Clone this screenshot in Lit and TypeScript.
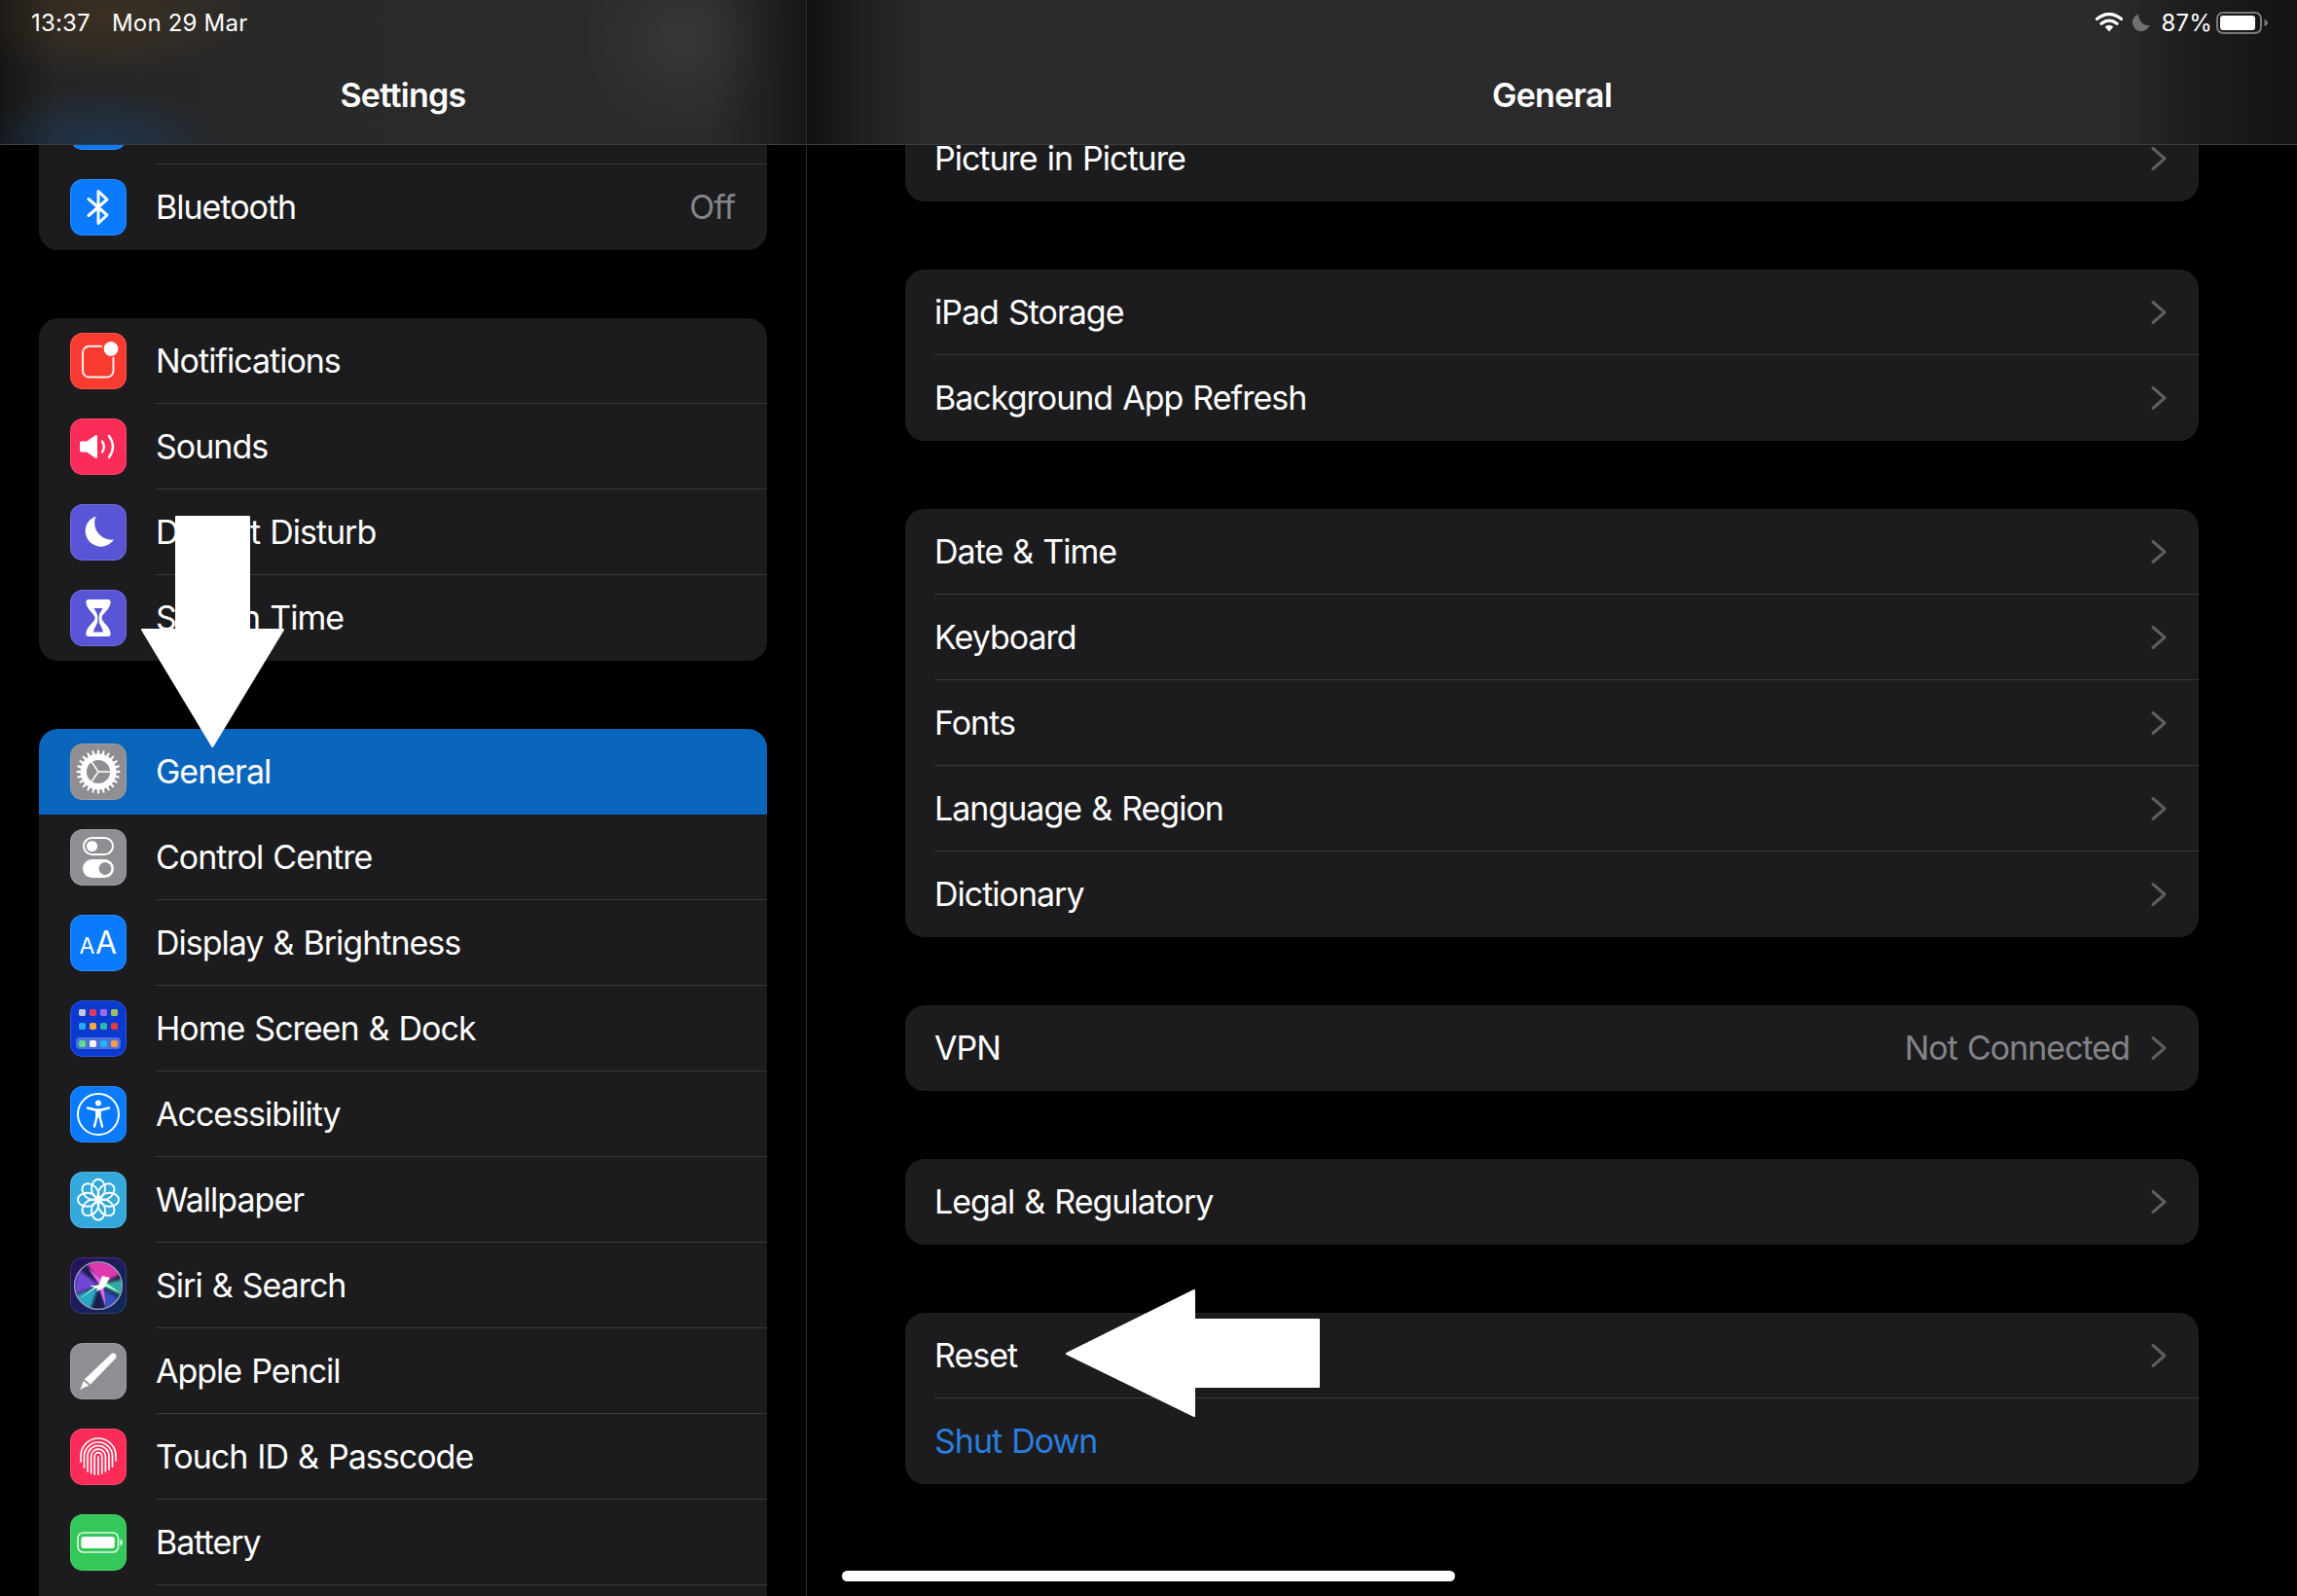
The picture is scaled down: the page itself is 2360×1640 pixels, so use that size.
import { LitElement, html, css, svg } from "lit";
import { customElement } from "lit/decorators.js";

function gearPath(): string {
  const cx = 29, cy = 29, teeth = 24, rOut = 22.4, rBase = 18.4;
  let d = "";
  for (let i = 0; i < teeth; i++) {
    const step = (Math.PI * 2) / teeth;
    const a = i * step;
    const pts: [number, number][] = [
      [rBase, a - step * 0.5],
      [rBase, a - step * 0.26],
      [rOut, a - step * 0.15],
      [rOut, a + step * 0.15],
      [rBase, a + step * 0.26],
    ];
    for (const [r, t] of pts) {
      const x = cx + r * Math.cos(t);
      const y = cy + r * Math.sin(t);
      d += (d ? "L" : "M") + x.toFixed(2) + " " + y.toFixed(2);
    }
  }
  d += "Z M29 16.9 A12.1 12.1 0 1 0 29 41.1 A12.1 12.1 0 1 0 29 16.9Z";
  return d;
}

const I: Record<string, { bg: string; art: unknown }> = {
  wifi: { bg: "#0a7aff", art: svg`` },
  bluetooth: {
    bg: "#0a7aff",
    art: svg`<path d="M19 20.5 38 37 29 45.5V12.5L38 21 19 37.5" fill="none" stroke="#fff" stroke-width="3" stroke-linecap="round" stroke-linejoin="round"/>`,
  },
  notifications: {
    bg: "#f83b30",
    art: svg`<path d="M33 13.8H19.5a6.5 6.5 0 0 0-6.5 6.5V39a6.5 6.5 0 0 0 6.5 6.5H38a6.5 6.5 0 0 0 6.5-6.5V25" fill="none" stroke="#fff" stroke-opacity=".92" stroke-width="2"/><circle cx="42" cy="16.4" r="7.4" fill="#fff"/>`,
  },
  sounds: {
    bg: "#fb2c57",
    art: svg`<path d="M11.5 23.5H17L26 17.2Q28 16.2 28 18.5V39.5Q28 41.8 26 40.8L17 34.5H11.5Q10 34.5 10 33V25Q10 23.5 11.5 23.5Z" fill="#fff"/><path d="M33 23.5Q36.6 29 33 34.5M40 18Q48 29 40 40" fill="none" stroke="#fff" stroke-width="2.4" stroke-linecap="round"/>`,
  },
  moon: {
    bg: "#5856d6",
    art: svg`<path d="M26.5 12.5A16 16 0 1 0 45 36.5 17.5 17.5 0 0 1 26.5 12.5Z" fill="#fff"/>`,
  },
  hourglass: {
    bg: "#5856d6",
    art: svg`<path d="M19 10H39Q42 10 41.6 13.5C40.5 21 33 24 32.4 29C33 34 40.5 37 41.6 44.5Q42 48 39 48H19Q16 48 16.4 44.5C17.5 37 25 34 25.6 29C25 24 17.5 21 16.4 13.5Q16 10 19 10Z" fill="#fff"/><path d="M24.5 19H33.5C32.5 22 30 23.5 29.7 27V32C30 36 33 38 34 43.5H24C25 38 28 36 28.3 32V27C28 23.5 25.5 22 24.5 19Z" fill="#5856d6"/>`,
  },
  gear: {
    bg: "#8e8e93",
    art: svg`<path d="${gearPath()}" fill="#fff" fill-rule="evenodd"/><path d="M29 29H41.5M29 29 22 18.6M29 29 22 39.4" stroke="#fff" stroke-width="1.6" fill="none"/>`,
  },
  control: {
    bg: "#8e8e93",
    art: svg`<rect x="14" y="9" width="30" height="17" rx="8.5" fill="none" stroke="#fff" stroke-width="2"/><circle cx="22.5" cy="17.5" r="5.6" fill="#fff"/><rect x="13" y="31" width="32" height="19" rx="9.5" fill="#fff"/><circle cx="36" cy="40.5" r="6.4" fill="#8e8e93"/>`,
  },
  display: {
    bg: "#0a7aff",
    art: svg`<text class="aa" x="9.4" y="40" font-size="23">A</text><text class="aa" x="26" y="40" font-size="32">A</text>`,
  },
  home: {
    bg: "#0b3ad0",
    art: svg`
      <rect x="9" y="9" width="7" height="7" rx="1.8" fill="#c5c7d9"/><rect x="20" y="9" width="7" height="7" rx="1.8" fill="#e5395f"/><rect x="31" y="9" width="7" height="7" rx="1.8" fill="#a06af0"/><rect x="42" y="9" width="7" height="7" rx="1.8" fill="#9ec25a"/>
      <rect x="9" y="23" width="7" height="7" rx="1.8" fill="#2ea7f0"/><rect x="20" y="23" width="7" height="7" rx="1.8" fill="#f1a83a"/><rect x="31" y="23" width="7" height="7" rx="1.8" fill="#2fb6a8"/><rect x="42" y="23" width="7" height="7" rx="1.8" fill="#e5393f"/>
      <rect x="6" y="38" width="46" height="12" rx="4" fill="#fff" fill-opacity=".28"/>
      <rect x="9" y="41" width="7" height="7" rx="1.8" fill="#5fd98b"/><rect x="20" y="41" width="7" height="7" rx="1.8" fill="#f5f5f5"/><rect x="31" y="41" width="7" height="7" rx="1.8" fill="#22b4f5"/><rect x="42" y="41" width="7" height="7" rx="1.8" fill="#f09a4a"/>`,
  },
  access: {
    bg: "#0a7aff",
    art: svg`<circle cx="29" cy="29" r="21" fill="none" stroke="#fff" stroke-width="2"/><circle cx="29" cy="17.5" r="3" fill="#fff"/><path d="M18 22.5 26 24.5H32L40 22.5M27.5 25V31.5L25 41.5M30.5 25V31.5L33 41.5" fill="none" stroke="#fff" stroke-width="2.4" stroke-linecap="round" stroke-linejoin="round"/><path d="M26.5 24.5H31.5V32H26.5Z" fill="#fff"/>`,
  },
  wallpaper: {
    bg: "#34aadc",
    art: svg`<g fill="none" stroke="#fff" stroke-width="1.9">
      ${[0, 45, 90, 135, 180, 225, 270, 315].map(
        (a) => svg`<ellipse cx="29" cy="17.3" rx="7" ry="9.6" transform="rotate(${a} 29 28.7)"/>`
      )}
      </g><circle cx="29" cy="28.7" r="4" fill="#fff"/>`,
  },
  siri: {
    bg: "#1a1446",
    art: svg`<defs>
        <linearGradient id="sirib" x1="0" y1="0" x2="1" y2="1"><stop offset="0" stop-color="#2a0f5c"/><stop offset="1" stop-color="#0f2a5a"/></linearGradient>
        <filter id="sirif" x="-30%" y="-30%" width="160%" height="160%"><feGaussianBlur stdDeviation="1.6"/></filter>
        <filter id="sirig" x="-30%" y="-30%" width="160%" height="160%"><feGaussianBlur stdDeviation=".5"/></filter>
        <clipPath id="siric"><circle cx="29" cy="29" r="24"/></clipPath>
      </defs>
      <rect width="58" height="58" fill="url(#sirib)"/>
      <circle cx="29" cy="29" r="24.4" fill="#1a1c4c"/>
      <g clip-path="url(#siric)">
        <g filter="url(#sirif)">
          <path d="M30 28 16 4H52L50 18Z" fill="#e038b0"/>
          <path d="M29 28 8 12 4 38Z" fill="#7048d8"/>
          <path d="M29 30 4 40 20 56Z" fill="#2aa8c0"/>
          <path d="M29 30 38 56 54 44Z" fill="#3450c0"/>
          <path d="M30 28 56 22 54 40Z" fill="#34a8a0"/>
        </g>
        <g filter="url(#sirig)">
          <path d="M31 26 9 43 26 32Z" fill="#a8ffe0"/>
          <path d="M29 29 37 52 34 28Z" fill="#f060d8"/>
          <path d="M30 27 52 37 36 25Z" fill="#90ffc8"/>
          <path d="M30 27 19 12 33 24Z" fill="#d070f0"/>
          <path d="M33 19 27 35 34 32 41 21Z" fill="#fff"/>
          <path d="M20 29H39L30 33Z" fill="#fff"/>
        </g>
      </g>
      <circle cx="29" cy="29" r="24.4" fill="none" stroke="#b0c0d4" stroke-opacity=".8" stroke-width="1.4"/>`,
  },
  pencil: {
    bg: "#8e8e93",
    art: svg`<path d="M42 11.5Q44.5 9.6 46.6 11.5 48.5 13.7 46.6 16L21 42.6 14.6 37.6Z" fill="#fff"/><path d="M13.6 39 19.6 43.8 13.6 46 10 48.8 11.6 45Z" fill="#fff"/>`,
  },
  touch: {
    bg: "#fb2c57",
    art: svg`<g fill="none" stroke="#fff" stroke-width="1.7" stroke-linecap="round">
      <path d="M11 34V28A18 18 0 0 1 47 28V33"/>
      <path d="M14.5 40V28.5A14.5 14.5 0 0 1 43.5 28.5V39"/>
      <path d="M18 44V28.5A11 11 0 0 1 40 28.5V42"/>
      <path d="M21.6 46V28.5A7.4 7.4 0 0 1 36.4 28.5V44"/>
      <path d="M25.2 47V28.5A3.8 3.8 0 0 1 32.8 28.5V46"/>
      <path d="M29 29V47"/>
    </g>`,
  },
  battery: {
    bg: "#34c759",
    art: svg`<rect x="8" y="19" width="41.5" height="20" rx="5.5" fill="none" stroke="#fff" stroke-opacity=".85" stroke-width="1.6"/><rect x="11.4" y="23" width="34.4" height="12" rx="2.8" fill="#fff"/><path d="M51.4 25.5Q54 27 54 29T51.4 32.5Z" fill="#fff" fill-opacity=".85"/>`,
  },
};

interface SideRow { icon: string; label: string; value?: string; selected?: boolean }
const sideGroups: SideRow[][] = [
  [
    { icon: "wifi", label: "" },
    { icon: "bluetooth", label: "Bluetooth", value: "Off" },
  ],
  [
    { icon: "notifications", label: "Notifications" },
    { icon: "sounds", label: "Sounds" },
    { icon: "moon", label: "Do Not Disturb" },
    { icon: "hourglass", label: "Screen Time" },
  ],
  [
    { icon: "gear", label: "General", selected: true },
    { icon: "control", label: "Control Centre" },
    { icon: "display", label: "Display & Brightness" },
    { icon: "home", label: "Home Screen & Dock" },
    { icon: "access", label: "Accessibility" },
    { icon: "wallpaper", label: "Wallpaper" },
    { icon: "siri", label: "Siri & Search" },
    { icon: "pencil", label: "Apple Pencil" },
    { icon: "touch", label: "Touch ID & Passcode" },
    { icon: "battery", label: "Battery" },
  ],
];

interface DetailRow { label: string; value?: string; link?: boolean }
const detailGroups: DetailRow[][] = [
  [{ label: "Picture in Picture" }],
  [{ label: "iPad Storage" }, { label: "Background App Refresh" }],
  [
    { label: "Date & Time" },
    { label: "Keyboard" },
    { label: "Fonts" },
    { label: "Language & Region" },
    { label: "Dictionary" },
  ],
  [{ label: "VPN", value: "Not Connected" }],
  [{ label: "Legal & Regulatory" }],
  [{ label: "Reset" }, { label: "Shut Down", link: true }],
];

@customElement("app-root")
export class AppRoot extends LitElement {
  static styles = css`
    :host {
      display: flex;
      position: relative;
      width: 2360px;
      height: 1640px;
      overflow: hidden;
      background: #000;
      color: #fff;
      font-family: Inter, "Liberation Sans", sans-serif;
      font-size: 34px;
      letter-spacing: -1px;
      word-spacing: 1.5px;
    }
    .side {
      width: 829px;
      flex: none;
      box-sizing: border-box;
      border-right: 1px solid #2c2c2e;
      display: flex;
      flex-direction: column;
      height: 1640px;
      overflow: hidden;
    }
    .detail {
      flex: 1;
      display: flex;
      flex-direction: column;
      height: 1640px;
      overflow: hidden;
    }
    .head {
      position: relative;
      z-index: 1;
      flex: none;
      height: 149px;
      box-sizing: border-box;
      border-bottom: 1px solid #3c3c3e;
    }
    .side .head {
      background:
        radial-gradient(ellipse 170px 70px at 110px 15px, rgba(120, 78, 20, 0.26), transparent),
        radial-gradient(ellipse 130px 60px at 100px 149px, rgba(20, 80, 150, 0.34), transparent),
        radial-gradient(ellipse 110px 110px at 700px 40px, rgba(255, 255, 255, 0.06), transparent),
        linear-gradient(90deg, #151515 0, #252526 55px, #2a2a2b 400px, #2a2a2b 730px, #181818 828px);
    }
    .detail .head {
      background: linear-gradient(90deg, #111 0, #1f1f20 55px, #2a2a2c 115px, #2b2b2d 1340px, #1d1d1e 1425px, #131313 100%);
    }
    .status {
      height: 46px;
      display: flex;
      align-items: center;
      font-size: 24px;
      letter-spacing: 0.2px;
      word-spacing: 0;
    }
    .status.left {
      padding-left: 32px;
      gap: 22px;
    }
    .status.right {
      justify-content: flex-end;
      padding-right: 30px;
    }
    .title {
      margin-top: 24px;
      line-height: 56px;
      text-align: center;
      font-weight: 600;
      font-size: 34px;
      letter-spacing: -0.7px;
    }
    .wifi { width: 28px; height: 20px; margin-right: 10px; }
    .dnd { width: 18px; height: 18px; margin-right: 11px; }
    .batt { width: 53px; height: 23px; margin-left: 4px; }
    .scroll-side {
      margin-top: -68px;
      padding: 0 40px;
      display: flex;
      flex-direction: column;
      gap: 70px;
    }
    .scroll-detail {
      margin-top: -30px;
      padding: 0 101px;
      display: flex;
      flex-direction: column;
      gap: 70px;
    }
    .card {
      background: #1c1c1e;
      border-radius: 20px;
      overflow: hidden;
    }
    .card.tail {
      padding-bottom: 30px;
    }
    .row {
      display: flex;
      align-items: center;
      height: 88px;
    }
    .row.sel {
      background: #0a65bd;
    }
    .ic {
      flex: none;
      width: 58px;
      height: 58px;
      margin: 0 30px 0 32px;
      border-radius: 13px;
      overflow: hidden;
      position: relative;
    }
    .ic svg {
      display: block;
      width: 58px;
      height: 58px;
    }
    .ic::after {
      content: "";
      position: absolute;
      inset: 0;
      border-radius: 13px;
      box-shadow: inset 0 0 0 1px rgba(255, 255, 255, 0.14);
    }
    .aa {
      fill: #fff;
      font-family: Inter, "Liberation Sans", sans-serif;
      font-weight: 400;
      letter-spacing: 0;
    }
    .body {
      flex: 1;
      min-width: 0;
      height: 100%;
      box-sizing: border-box;
      border-bottom: 1px solid #3a3a3c;
      display: flex;
      align-items: center;
      padding-right: 33px;
    }
    .row:last-child .body,
    .row.sel .body {
      border-bottom-color: transparent;
    }
    .tail .row:last-child .body {
      border-bottom-color: #3a3a3c;
    }
    .detail .body {
      margin-left: 30px;
      padding-right: 33px;
    }
    .label {
      flex: 1;
      white-space: nowrap;
    }
    .link {
      color: #2a7ede;
    }
    .value {
      color: #848488;
    }
    .chev {
      width: 16px;
      height: 24px;
      margin-left: 22px;
      flex: none;
    }
    .indicator {
      position: absolute;
      left: 865px;
      top: 1614px;
      width: 630px;
      height: 11px;
      border-radius: 6px;
      background: #fff;
      z-index: 3;
    }
    .arrows {
      position: absolute;
      left: 0;
      top: 0;
      width: 2360px;
      height: 1640px;
      z-index: 4;
      pointer-events: none;
    }
  `;

  private sideRow(r: SideRow) {
    return html`<div class="row ${r.selected ? "sel" : ""}">
      <div class="ic" style="background:${I[r.icon].bg}">
        <svg viewBox="0 0 58 58">${I[r.icon].art}</svg>
      </div>
      <div class="body">
        <span class="label">${r.label}</span>
        ${r.value ? html`<span class="value">${r.value}</span>` : ""}
      </div>
    </div>`;
  }

  private detailRow(r: DetailRow) {
    return html`<div class="row">
      <div class="body">
        <span class="label ${r.link ? "link" : ""}">${r.label}</span>
        ${r.value ? html`<span class="value">${r.value}</span>` : ""}
        ${r.link
          ? ""
          : html`<svg class="chev" viewBox="0 0 16 24">
              <path d="M2 1.5 14 12 2 22.5" fill="none" stroke="#5e5e62" stroke-width="3" stroke-linecap="round" stroke-linejoin="round" />
            </svg>`}
      </div>
    </div>`;
  }

  render() {
    return html`
      <section class="side">
        <header class="head">
          <div class="status left"><span>13:37</span><span>Mon 29 Mar</span></div>
          <div class="title">Settings</div>
        </header>
        <div class="scroll-side">
          ${sideGroups.map(
            (g, i) => html`<div class="card ${i === sideGroups.length - 1 ? "tail" : ""}">${g.map((r) => this.sideRow(r))}</div>`
          )}
        </div>
      </section>
      <section class="detail">
        <header class="head">
          <div class="status right">
            <svg class="wifi" viewBox="0 0 28 20">
              <path d="M1.5 6.5Q14-3.5 26.5 6.5M6 11.2Q14 5 22 11.2" fill="none" stroke="#fff" stroke-width="3.2" stroke-linecap="round" />
              <path d="M9.6 14.6Q14 11 18.4 14.6L14 19.6Z" fill="#fff" />
            </svg>
            <svg class="dnd" viewBox="0 0 18 18">
              <path d="M6.5.5A9 9 0 1 0 17.5 12 10 10 0 0 1 6.5.5Z" fill="#717173" />
            </svg>
            <span>87%</span>
            <svg class="batt" viewBox="0 0 53 23">
              <rect x="1" y="1" width="45" height="21" rx="6" fill="none" stroke="#7a7a7c" stroke-width="2" />
              <rect x="4" y="4" width="36" height="15" rx="3" fill="#fff" />
              <path d="M49.5 8Q53 9.5 53 11.5T49.5 15Z" fill="#7a7a7c" />
            </svg>
          </div>
          <div class="title">General</div>
        </header>
        <div class="scroll-detail">
          ${detailGroups.map((g) => html`<div class="card">${g.map((r) => this.detailRow(r))}</div>`)}
        </div>
      </section>
      <div class="indicator"></div>
      <svg class="arrows" viewBox="0 0 2360 1640">
        <polygon points="181,531 256,531 256,647 291,647 218.3,767 146,647 181,647" fill="#fff" stroke="#fff" stroke-width="2" stroke-linejoin="round" />
        <polygon points="1096,1391 1227,1326 1227,1356 1355,1356 1355,1425 1227,1425 1227,1455" fill="#fff" stroke="#fff" stroke-width="2" stroke-linejoin="round" />
      </svg>
    `;
  }
}
